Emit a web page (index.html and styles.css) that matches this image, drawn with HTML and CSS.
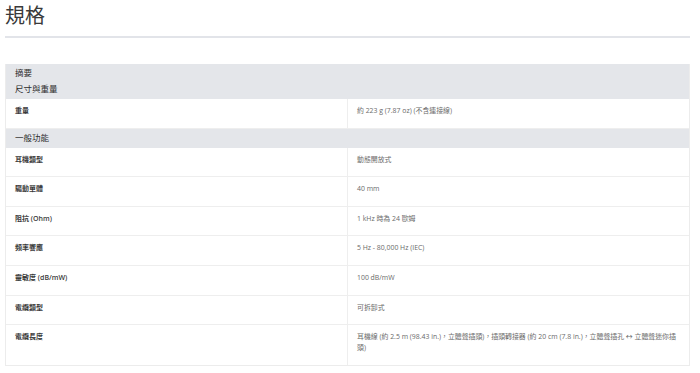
FILE: index.html
```html
<!DOCTYPE html>
<html lang="zh-Hant">
<head>
<meta charset="utf-8">
<title>規格</title>
<link rel="stylesheet" href="styles.css">
</head>
<body>
<div class="page">
  <h1 class="title">規格</h1>
  <div class="specs">
    <div class="group">
      <div class="group-title">摘要</div>
      <div class="group-title">尺寸與重量</div>
    </div>
    <div class="row"><div class="label">重量</div><div class="value">約 223 g (7.87 oz) (不含連接線)</div></div>
    <div class="group"><div class="group-title">一般功能</div></div>
    <div class="row"><div class="label">耳機類型</div><div class="value">動態開放式</div></div>
    <div class="row"><div class="label">驅動單體</div><div class="value">40 mm</div></div>
    <div class="row"><div class="label">阻抗 (Ohm)</div><div class="value">1 kHz 時為 24 歐姆</div></div>
    <div class="row"><div class="label">頻率響應</div><div class="value">5 Hz - 80,000 Hz (IEC)</div></div>
    <div class="row"><div class="label">靈敏度 (dB/mW)</div><div class="value">100 dB/mW</div></div>
    <div class="row"><div class="label">電纜類型</div><div class="value">可拆卸式</div></div>
    <div class="row last"><div class="label">電纜長度</div><div class="value">耳機線 (約 2.5 m (98.43 in.)，立體聲插頭)，插頭轉接器 (約 20 cm (7.8 in.)，立體聲插孔 ↔ 立體聲迷你插頭)</div></div>
  </div>
</div>
</body>
</html>
```

FILE: styles.css
```css
html, body {
  margin: 0;
  padding: 0;
  background: #fff;
}
body {
  font-family: "Open Sans", "Noto Sans CJK TC", sans-serif;
  color: #333;
}
.page {
  padding: 0 10px 0 5px;
}
.title {
  margin: 0;
  padding-top: 3px;
  font-size: 20px;
  line-height: 26px;
  font-weight: 400;
  color: #3a3a3a;
  height: 33px;
  border-bottom: 2px solid #e2e4e9;
}
.specs {
  margin-top: 26px;
  border: 1px solid #ececec;
  border-top: none;
}
.group {
  background: #e4e6ea;
  padding: 1px 9px 2px;
}
.group-title {
  font-size: 8.5px;
  line-height: 16px;
  color: #2e2e2e;
}
.row {
  display: grid;
  grid-template-columns: 342px 1fr;
  border-bottom: 1px solid #eeeeee;
}
.row.last {
  border-bottom: none;
}
.label, .value {
  padding: 6px 8px 11.6px 9px;
  font-size: 7px;
  line-height: 11px;
}
.label {
  font-weight: 600;
  color: #3a3a3a;
  border-right: 1px solid #eeeeee;
}
.value {
  color: #6a6a6a;
  font-size: 6.9px;
}
```
